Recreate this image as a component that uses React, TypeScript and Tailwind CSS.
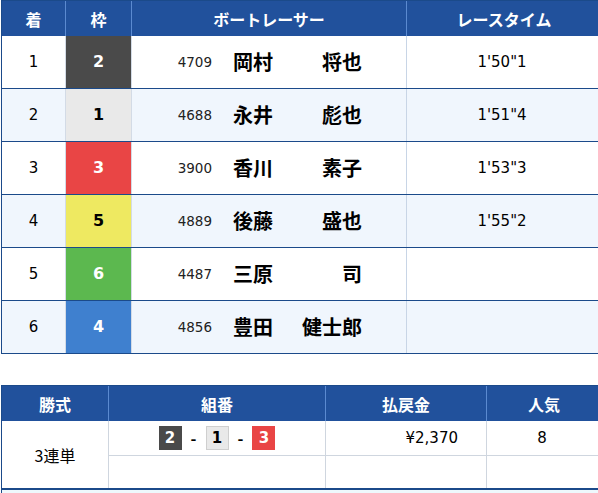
import React from 'react';

type Racer = {
  rank: number;
  waku: number;
  toban: string;
  sei: string;
  mei: string;
  time: string;
};

const racers: Racer[] = [
  { rank: 1, waku: 2, toban: '4709', sei: '岡村', mei: '将也', time: `1'50"1` },
  { rank: 2, waku: 1, toban: '4688', sei: '永井', mei: '彪也', time: `1'51"4` },
  { rank: 3, waku: 3, toban: '3900', sei: '香川', mei: '素子', time: `1'53"3` },
  { rank: 4, waku: 5, toban: '4889', sei: '後藤', mei: '盛也', time: `1'55"2` },
  { rank: 5, waku: 6, toban: '4487', sei: '三原', mei: '司', time: '' },
  { rank: 6, waku: 4, toban: '4856', sei: '豊田', mei: '健士郎', time: '' },
];

const wakuColor: Record<number, string> = {
  1: 'bg-[#e9e9e9] text-black',
  2: 'bg-[#4a4a4a] text-white',
  3: 'bg-[#e94545] text-white',
  4: 'bg-[#3f80cf] text-white',
  5: 'bg-[#eee961] text-black',
  6: 'bg-[#5cb84f] text-white',
};

const font = "font-['Noto_Sans_CJK_JP',sans-serif]";
const numFont = "font-['DejaVu_Sans','Noto_Sans_CJK_JP',sans-serif]";

function Head({ w, children, last }: { w: string; children: React.ReactNode; last?: boolean }) {
  return (
    <div
      className={`${w} flex items-center justify-center text-[16px] font-bold text-white ${
        last ? '' : 'border-r border-[#5b8ad0]'
      }`}
    >
      {children}
    </div>
  );
}

function Box({ n }: { n: number }) {
  return (
    <span
      className={`flex h-6 w-[23px] items-center justify-center text-[15px] font-bold ${numFont} ${
        n === 1 ? 'border border-[#cfcfcf] ' : ''
      }${wakuColor[n]}`}
    >
      {n}
    </span>
  );
}

export default function App() {
  return (
    <div className={`w-[598px] h-[493px] overflow-hidden bg-white ${font}`}>
      {/* Result table */}
      <div className="ml-px w-[600px] border-l border-[#1b4a8a]">
        <div className="flex h-[36px] bg-[#21519c] border-t border-[#1b4a8a]">
          <Head w="w-[64px]">着</Head>
          <Head w="w-[66px]">枠</Head>
          <Head w="w-[275px]">ボートレーサー</Head>
          <Head w="flex-1" last>
            レースタイム
          </Head>
        </div>
        {racers.map((r, i) => (
          <div
            key={r.rank}
            className={`flex h-[53px] border-b border-[#1b4a8a] ${i % 2 === 1 ? 'bg-[#f0f6fd]' : 'bg-white'}`}
          >
            <div className={`w-[64px] flex items-center justify-center text-[15px] border-r border-[#d3dbe6] ${numFont}`}>
              {r.rank}
            </div>
            <div
              className={`w-[66px] flex items-center justify-center text-[16px] font-bold border-r border-[#d3dbe6] ${numFont} ${wakuColor[r.waku]}`}
            >
              {r.waku}
            </div>
            <div className="w-[275px] flex items-center border-r border-[#c8d5e6]">
              <span className={`w-[80px] text-right text-[13.5px] text-[#222] ${numFont}`}>{r.toban}</span>
              <span className="ml-[21px] w-[129px] flex justify-between text-[20px] font-bold text-black">
                <span>{r.sei}</span>
                <span>{r.mei}</span>
              </span>
            </div>
            <div className={`flex-1 flex items-center justify-center pr-[4px] text-[15px] ${numFont}`}>
              {r.time}
            </div>
          </div>
        ))}
      </div>

      {/* Payout table */}
      <div className="mt-[31px] ml-px w-[600px] border-l border-[#1b4a8a]">
        <div className="flex h-[36px] bg-[#21519c] border-t border-[#1b4a8a]">
          <Head w="w-[107px]">勝式</Head>
          <Head w="w-[217px]">組番</Head>
          <Head w="w-[161px]">払戻金</Head>
          <Head w="flex-1" last>
            人気
          </Head>
        </div>
        <div className="flex h-[69px] border-b-2 border-[#1b4a8a] bg-white">
          <div className="w-[107px] flex items-center justify-center text-[16px] border-r border-[#cfd6df]">
            3連単
          </div>
          <div className="flex-1 flex flex-col">
            <div className="flex h-[35px] border-b border-[#cfd6df]">
              <div className="w-[217px] flex items-center justify-center gap-[9px] border-r border-[#cfd6df]">
                <Box n={2} />
                <span className="font-bold text-[16px]">-</span>
                <Box n={1} />
                <span className="font-bold text-[16px]">-</span>
                <Box n={3} />
              </div>
              <div className={`w-[161px] flex items-center justify-end pr-[28px] text-[15px] border-r border-[#cfd6df] ${numFont}`}>
                ¥2,370
              </div>
              <div className={`flex-1 flex items-center justify-center pr-[4px] text-[15px] ${numFont}`}>8</div>
            </div>
            <div className="flex flex-1">
              <div className="w-[217px] border-r border-[#cfd6df]" />
              <div className="w-[161px] border-r border-[#cfd6df]" />
              <div className="flex-1" />
            </div>
          </div>
        </div>
        <div className="h-[20px] bg-[#eef8fc]" />
      </div>
    </div>
  );
}
